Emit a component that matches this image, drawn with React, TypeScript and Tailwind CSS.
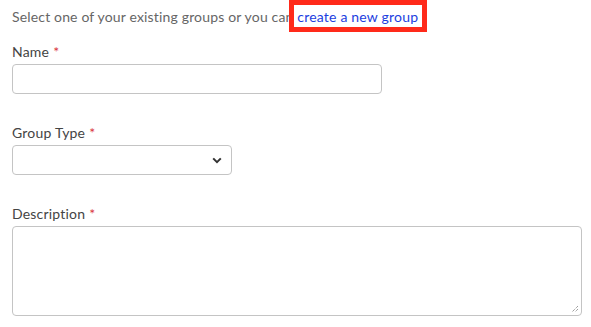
import React from "react";

function Label({ text }: { text: string }) {
  return (
    <div className="h-6 flex items-center text-[14px] leading-6 tracking-[0.2px] text-[#444]">
      {text}
      <span className="ml-1 text-[#d9363e]">*</span>
    </div>
  );
}

export default function App() {
  return (
    <div
      className="w-[591px] h-[327px] bg-white pl-3 pt-[5px] overflow-hidden"
      style={{ fontFamily: "Lato, 'Noto Sans', sans-serif" }}
    >
      <div className="h-6 text-[14px] leading-6 tracking-[0.16px] text-[#666] whitespace-nowrap relative">
        Select one of your existing groups or you can{" "}
        <span className="relative text-[#1c3ee0] tracking-[0.2px]">
          <span className="absolute left-[-8px] right-[-9px] top-[-8px] bottom-[-7px] border-[5px] border-[#ff2a1a] bg-white"></span>
          <span className="relative">create a new group</span>
        </span>
      </div>
      <div className="mt-[11px]">
        <Label text="Name" />
        <div className="w-[370px] h-[30px] border border-[#c4c4c4] rounded-[4px] bg-white"></div>
      </div>
      <div className="mt-[27px]">
        <Label text="Group Type" />
        <div className="w-[220px] h-[30px] border border-[#c4c4c4] rounded-[4px] bg-white flex items-center justify-end pr-[9px]">
          <svg width="10" height="7" viewBox="0 0 10 7">
            <path d="M1.2 1.4 L5 5.2 L8.8 1.4" fill="none" stroke="#333" strokeWidth="2" />
          </svg>
        </div>
      </div>
      <div className="mt-[27px]">
        <Label text="Description" />
        <div className="relative w-[570px] h-[90px] border border-[#c4c4c4] rounded-[4px] bg-white">
          <svg className="absolute right-[2px] bottom-[2px]" width="9" height="9" viewBox="0 0 9 9">
            <path d="M8 2 L2 8 M8 5 L5 8" stroke="#777" strokeWidth="1" strokeDasharray="1 1" />
          </svg>
        </div>
      </div>
    </div>
  );
}
